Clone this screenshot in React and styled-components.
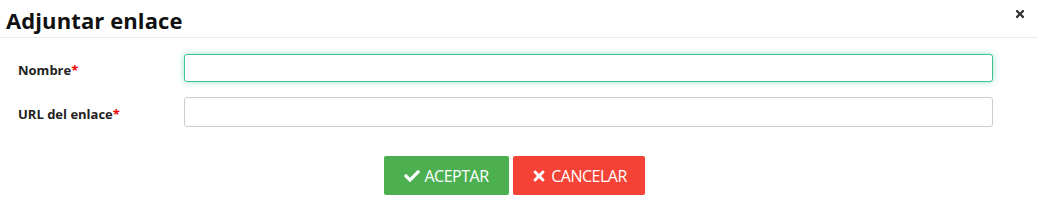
import styled, { createGlobalStyle } from "styled-components";
import { FaCheck, FaTimes } from "react-icons/fa";

const Global = createGlobalStyle`
  body {
    margin: 0;
    background: #fff;
    font-family: "Open Sans", "Liberation Sans", sans-serif;
    color: #111;
  }
`;

const Modal = styled.div`
  width: 1038px;
`;

const Header = styled.div`
  display: flex;
  align-items: center;
  justify-content: space-between;
  height: 38px;
  padding: 0 12px 0 6px;
  box-sizing: border-box;
  border-bottom: 1px solid #e9ecef;
`;

const Title = styled.h4`
  margin: 2px 0 0;
  font-size: 22px;
  font-weight: 700;
  letter-spacing: 0.1px;
  line-height: 30px;
  color: #111;
`;

const Close = styled.button`
  border: 0;
  background: none;
  padding: 0;
  margin-top: -10px;
  color: #333;
  font-size: 12px;
  display: flex;
  cursor: pointer;
`;

const Body = styled.div`
  padding: 16px 45px 0 18px;
`;

const Row = styled.div`
  display: grid;
  grid-template-columns: 166px 1fr;
  align-items: center;
  margin-bottom: ${(p) => p.gap || 15}px;
`;

const Label = styled.label`
  font-size: 13px;
  font-weight: 700;
  color: #222;
  padding-top: 3px;
`;

const Req = styled.span`
  color: #e00;
`;

const Input = styled.input`
  height: ${(p) => (p.focused ? 28 : 30)}px;
  box-sizing: border-box;
  border: 1px solid ${(p) => (p.focused ? "#3cc48e" : "#ccc")};
  border-radius: 3px;
  box-shadow: ${(p) => (p.focused ? "0 0 6px rgba(60,196,142,0.5)" : "none")};
  outline: none;
  padding: 0 8px;
  font-size: 13px;
  font-family: inherit;
`;

const Footer = styled.div`
  display: flex;
  justify-content: center;
  gap: 4px;
  padding: 14px 9px 0 0;
`;

const Button = styled.button`
  display: flex;
  align-items: center;
  justify-content: center;
  gap: 4px;
  width: ${(p) => p.w}px;
  height: 39px;
  padding: 0;
  border: 0;
  border-radius: 2px;
  background: ${(p) => p.bg};
  color: #fff;
  font-family: "Open Sans", sans-serif;
  font-size: 16px;
  letter-spacing: -0.5px;
  cursor: pointer;
  svg {
    font-size: 16px;
  }
`;

export default function App() {
  return (
    <Modal>
      <Global />
      <Header>
        <Title>Adjuntar enlace</Title>
        <Close>
          <FaTimes />
        </Close>
      </Header>
      <Body>
        <Row>
          <Label>
            Nombre<Req>*</Req>
          </Label>
          <Input focused />
        </Row>
        <Row gap={0}>
          <Label>
            URL del enlace<Req>*</Req>
          </Label>
          <Input />
        </Row>
      </Body>
      <Footer>
        <Button bg="#4caf50" w={125}>
          <FaCheck /> ACEPTAR
        </Button>
        <Button bg="#f44336" w={132}>
          <FaTimes /> CANCELAR
        </Button>
      </Footer>
    </Modal>
  );
}
